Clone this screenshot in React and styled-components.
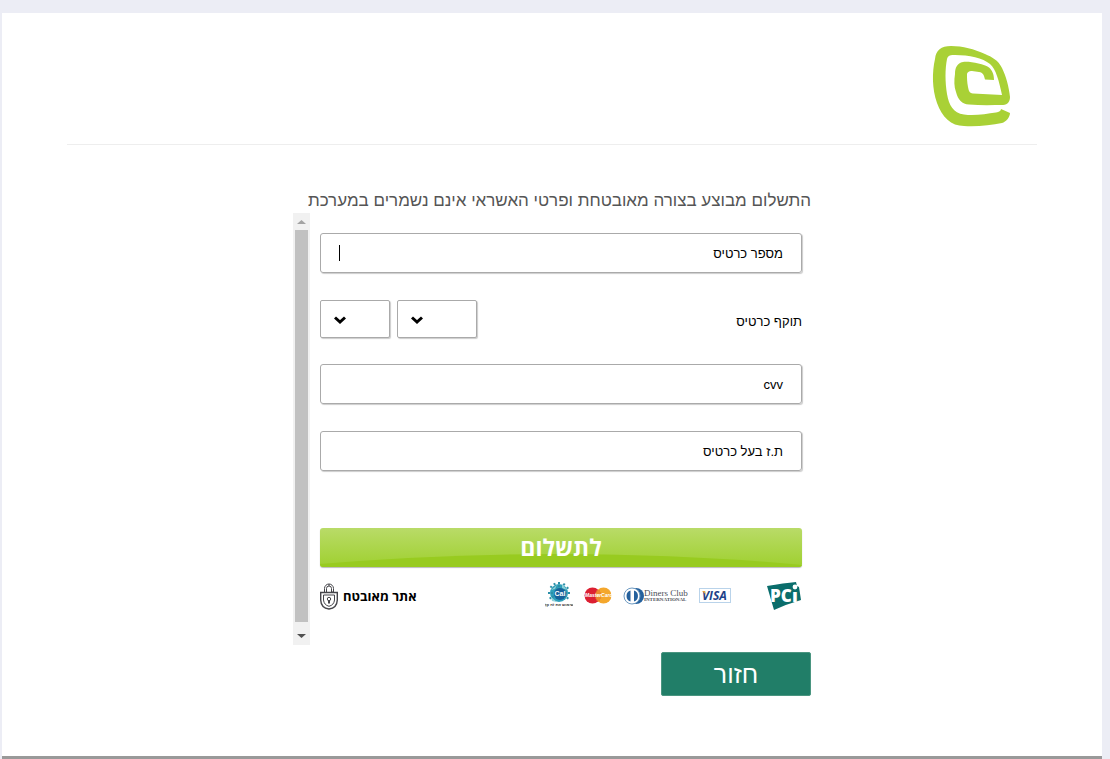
import React, { useState } from "react";
import styled, { createGlobalStyle } from "styled-components";

const Logo = () => (
  <svg width="80" height="84" viewBox="0 0 80 84" role="img" aria-label="e">
    <path
      fill="#a9d136"
      d="M20 1 C10 1 5 5 4 14 C1 27 1 44 6 58 C11 72 20 81 33 81 C46 82 60 80 71 78 C75 77 79 72 79 68 L70 64 C70 66 68 67 65 67.5 C55 69 43 71 33 69.5 C22 68 18 60 16 49 C14 37 14 24 16 14 C17 10 20 10 24 10 C38 10 52 13 59 19 C65 24 68 36 71 50 L42 48.5 C38 48 38 46 37 42 C36 37 36 33 36 30 C36 27 38 26 41 26 L48 27 C52 27.5 53 30 54 34.5 L63 35 C63 29 61 25 58 22.5 C53 19 38 16 32 17 C26 18 24 23 24 29 C23 35 23 42 25 47 C27 55 31 59 38 59.5 C50 60.5 62 60 72 60 C77 60 79 56 79 52 C78 42 75 31 71 23 C67 15 61 12 54 9 C43 4 32 1 20 1Z"
    />
  </svg>
);

const PciLogo = () => (
  <svg width="35" height="29" viewBox="0 0 35 29" role="img" aria-label="PCI">
    <path fill="#0a6d6b" d="M0 4 Q17 1 29 0 L30 4 L32 5 L34 18 Q20 22 7 28 Z" />
    <circle cx="28" cy="5" r="2.4" fill="#fff" />
    <g fill="#fff" fontFamily="'Open Sans', sans-serif" fontWeight="800">
      <text x="3" y="20" fontSize="17">PC</text>
      <text x="25" y="20" fontSize="18">ı</text>
    </g>
  </svg>
);

const VisaLogo = () => (
  <svg width="32" height="17" viewBox="0 0 32 17" role="img" aria-label="VISA">
    <rect x="0.5" y="0.5" width="31" height="14" fill="#fff" stroke="#b9d3ea" />
    <text
      x="3"
      y="12"
      fill="#1d4289"
      fontFamily="'Open Sans', sans-serif"
      fontSize="12"
      fontStyle="italic"
      fontWeight="700"
    >
      VISA
    </text>
    <path fill="#e9a63a" d="M3 3 H6 L7 7 Q5 4 3 3Z" />
  </svg>
);

const DinersLogo = () => (
  <svg width="65" height="19" viewBox="0 0 65 19" role="img" aria-label="Diners Club International">
    <path fill="#25619d" d="M9 1 H13 A8 8 0 0 1 13 17 H9Z" />
    <circle cx="9" cy="9" r="8" fill="#fff" stroke="#6f9bc2" strokeWidth="1" />
    <path fill="#25619d" d="M7.5 3.5 V14.5 A5.8 5.8 0 0 1 7.5 3.5Z M11 3.5 A5.8 5.8 0 0 1 11 14.5Z" />
    <g fill="#4b4f58" fontFamily="'Liberation Serif', serif">
      <text x="21" y="9" fontSize="9">Diners Club</text>
      <text x="21" y="14" fontSize="5" fontWeight="bold">INTERNATIONAL</text>
    </g>
  </svg>
);

const MasterCardLogo = () => (
  <svg width="28" height="19" viewBox="0 0 28 19" role="img" aria-label="MasterCard">
    <circle cx="8.5" cy="8.5" r="8" fill="#dc1f32" />
    <circle cx="19.5" cy="8.5" r="8" fill="#f4a72c" />
    <path stroke="#e36b2e" d="M12 4 H16 M11 6 H17 M11 11 H17 M12 13 H16" />
    <text
      x="1"
      y="10"
      fill="#fff"
      fontFamily="'Liberation Sans', sans-serif"
      fontSize="5"
      fontStyle="italic"
      fontWeight="bold"
    >
      MasterCard
    </text>
  </svg>
);

const CalLogo = () => (
  <svg width="28" height="28" viewBox="0 0 28 28" role="img" aria-label="Cal">
    <circle cx="14" cy="11" r="9" fill="#2e9fba" />
    <path
      stroke="#2c8fa8"
      strokeWidth="2"
      strokeDasharray="2 1"
      d="M14 11 L5 4 M14 11 L9 1 M14 11 V0 M14 11 L20 1 M14 11 L24 5 M14 11 H26 M14 11 H2 M14 11 L4 17 M14 11 L24 17"
    />
    <path fill="#8fd0d8" d="M6 8 L12 3 L10 7Z M17 2 L22 8 L17 6Z M6 15 L12 20 L7 19Z" />
    <circle cx="15" cy="12" r="6" fill="#17619a" />
    <g fontFamily="'Liberation Sans', sans-serif" fontWeight="bold" textAnchor="middle">
      <text x="15" y="14" fill="#fff" fontSize="7">Cal</text>
      <text x="14" y="24" fill="#333" fontSize="4">שימוש את זה קל</text>
    </g>
  </svg>
);

const LockIcon = () => (
  <svg width="18" height="27" viewBox="0 0 18 27" fill="none" stroke="#45454a" aria-hidden="true">
    <path d="M4.5 9 V5.5 A4.5 4.5 0 0 1 13.5 5.5 V9 H11.5 V5.5 A2.5 2.5 0 0 0 6.5 5.5 V9" />
    <path d="M9 1 V3" />
    <path d="M0.7 9.5 H17.3 V17 Q17 25 9 26 Q1 25 0.7 17Z" strokeWidth="1.4" />
    <path d="M3.5 12 H14.5 V17 Q14 22 9 23.3 Q4 22 3.5 17Z" />
    <circle cx="9" cy="16" r="1.7" />
    <path d="M9 18 V20.5" strokeWidth="2" />
  </svg>
);

const TextField = ({ id, label, value, onChange, showCaret }) => (
  <FieldBox>
    <label htmlFor={id}>{label}</label>
    <input id={id} type="text" value={value} onChange={onChange} />
    {showCaret && <Caret />}
  </FieldBox>
);

const DateSelect = ({ label, options, wide }) => (
  <SelectBox $wide={wide}>
    <select aria-label={label} defaultValue="">
      <option value=""></option>
      {options.map((option) => (
        <option key={option} value={option}>
          {option}
        </option>
      ))}
    </select>
    <svg width="12" height="9" viewBox="0 0 12 9" aria-hidden="true">
      <path d="M1 1.5 L6 6 L11 1.5" fill="none" stroke="#000" strokeWidth="3" />
    </svg>
  </SelectBox>
);

const months = Array.from({ length: 12 }, (_, i) => i + 1);
const years = Array.from({ length: 10 }, (_, i) => 2020 + i);

const App = () => {
  const [details, setDetails] = useState({ card: "", cvv: "", owner: "" });

  const handleChange = (field) => (e) =>
    setDetails({ ...details, [field]: e.target.value });

  return (
    <>
      <GlobalStyle />
      <Page dir="rtl">
        <Header>
          <Logo />
        </Header>
        <Main>
          <Notice>התשלום מבוצע בצורה מאובטחת ופרטי האשראי אינם נשמרים במערכת</Notice>
          <Frame>
            <Form onSubmit={(e) => e.preventDefault()}>
              <TextField
                id="card"
                label="מספר כרטיס"
                value={details.card}
                onChange={handleChange("card")}
                showCaret={!details.card}
              />
              <ExpiryRow>
                <legend>תוקף כרטיס</legend>
                <Selects>
                  <DateSelect label="חודש" options={months} wide />
                  <DateSelect label="שנה" options={years} />
                </Selects>
              </ExpiryRow>
              <TextField
                id="cvv"
                label="cvv"
                value={details.cvv}
                onChange={handleChange("cvv")}
              />
              <TextField
                id="owner"
                label="ת.ז בעל כרטיס"
                value={details.owner}
                onChange={handleChange("owner")}
              />
              <PayButton type="submit">
                <svg viewBox="0 0 482 39" preserveAspectRatio="none" aria-hidden="true">
                  <path fill="#98cb20" d="M0 36 Q120 26 241 26 Q380 27 482 37 V39 H0Z" />
                </svg>
                <span>לתשלום</span>
              </PayButton>
              <Brands>
                <PciLogo />
                <Cards>
                  <VisaLogo />
                  <DinersLogo />
                  <MasterCardLogo />
                  <CalLogo />
                </Cards>
                <Secure>
                  אתר מאובטח
                  <LockIcon />
                </Secure>
              </Brands>
            </Form>
            <ScrollBar aria-hidden="true">
              <svg width="17" height="17">
                <path d="M4 11 L8.5 7 L13 11Z" fill="#a3a3a3" />
              </svg>
              <Thumb />
              <svg width="17" height="17">
                <path d="M4 6 L8.5 10 L13 6Z" fill="#505050" />
              </svg>
            </ScrollBar>
          </Frame>
          <BackButton type="button">חזור</BackButton>
        </Main>
      </Page>
    </>
  );
};

const GlobalStyle = createGlobalStyle`
  * {
    box-sizing: border-box;
  }
  body {
    margin: 0;
    background: #ecedf5;
    font-family: "Liberation Sans", Arial, sans-serif;
    font-size: 13px;
    color: #000;
  }
  input,
  select,
  button {
    font-family: inherit;
  }
`;

const Page = styled.div`
  margin: 13px 8px 0 2px;
  padding: 0 65px 60px;
  background: #fff;
  border-bottom: 3px solid #999;
`;

const Header = styled.header`
  display: flex;
  padding: 32px 26px 15px;
  border-bottom: 1px solid #eee;
`;

const Main = styled.main`
  max-width: 518px;
  margin: 0 auto;
  padding-top: 44px;
`;

const Notice = styled.p`
  margin: 0;
  font-size: 17px;
  line-height: 24px;
  white-space: nowrap;
  color: #555;
`;

const Frame = styled.div`
  display: flex;
`;

const Form = styled.form`
  flex: 1;
  display: flex;
  flex-direction: column;
  gap: 26px;
  padding: 20px 9px 34px 10px;
`;

const FieldBox = styled.div`
  display: flex;
  align-items: center;
  gap: 12px;
  height: 40px;
  margin-bottom: 1px;
  padding: 0 18px;
  border: 1px solid #aaa;
  border-radius: 3px;
  box-shadow: 1px 1px 1px #ccc;

  input {
    flex: 1;
    min-width: 0;
    height: 100%;
    padding: 0;
    border: 0;
    outline: 0;
    background: transparent;
    direction: ltr;
    font-size: 13px;
  }
`;

const Caret = styled.span`
  width: 1px;
  height: 16px;
  background: #000;
`;

const ExpiryRow = styled.fieldset`
  display: flex;
  align-items: center;
  justify-content: space-between;
  height: 38px;
  margin: 0;
  padding: 0;
  border: 0;

  legend {
    float: right;
    padding: 4px 0 0;
  }
`;

const Selects = styled.div`
  display: flex;
  gap: 7px;
  margin-right: auto;
`;

const SelectBox = styled.div`
  position: relative;
  width: ${({ $wide }) => ($wide ? "80px" : "70px")};
  height: 38px;

  select {
    width: 100%;
    height: 100%;
    padding: 0 12px 0 28px;
    appearance: none;
    background: #fff;
    border: 1px solid #aaa;
    border-radius: 2px;
    box-shadow: 1px 1px 1px #ccc;
  }

  svg {
    position: absolute;
    left: 14px;
    top: 16px;
    pointer-events: none;
  }
`;

const PayButton = styled.button`
  position: relative;
  height: 39px;
  margin-top: 30px;
  padding: 0;
  overflow: hidden;
  border: 0;
  border-radius: 3px;
  background: linear-gradient(#b9db68, #9fd02f);
  box-shadow: 0 1px 1px #bbb;
  color: #fff;
  font-family: "Open Sans", sans-serif;
  font-size: 23px;
  font-weight: bold;
  line-height: 39px;
  cursor: pointer;

  svg {
    position: absolute;
    inset: 0;
    width: 100%;
    height: 100%;
  }

  span {
    position: relative;
  }
`;

const Brands = styled.div`
  display: flex;
  align-items: center;
  height: 30px;
  margin-top: -12px;

  svg {
    direction: ltr;
  }
`;

const Cards = styled.div`
  display: flex;
  align-items: center;
  gap: 11px;
  margin-right: 36px;
`;

const Secure = styled.div`
  display: flex;
  align-items: center;
  gap: 5px;
  margin-right: auto;
  font-family: "Open Sans", sans-serif;
  font-weight: bold;
`;

const ScrollBar = styled.div`
  display: flex;
  flex-direction: column;
  width: 17px;
  background: #f1f1f1;
`;

const Thumb = styled.div`
  flex: 1;
  margin: 0 2px 6px;
  background: #c1c1c1;
`;

const BackButton = styled.button`
  display: block;
  width: 150px;
  height: 44px;
  margin-top: 7px;
  padding: 0;
  border: 1px solid #4a9580;
  border-radius: 2px;
  background: #217e68;
  color: #fff;
  font-size: 25px;
  cursor: pointer;
`;

export default App;
